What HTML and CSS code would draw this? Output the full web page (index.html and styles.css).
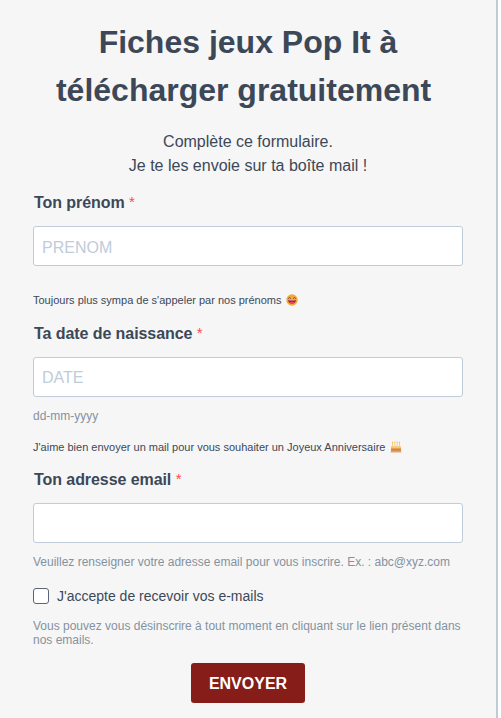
FILE: index.html
```html
<!DOCTYPE html>
<html lang="fr">
<head>
<meta charset="utf-8">
<title>Fiches jeux Pop It</title>
<link rel="stylesheet" href="styles.css">
</head>
<body>
<form class="panel">
  <h1 class="title">Fiches jeux Pop It à<br>télécharger gratuitement&nbsp;</h1>
  <p class="intro">Complète ce formulaire.<br>Je te les envoie sur ta boîte mail !</p>

  <div class="field field-name">
    <label class="label" for="name">Ton prénom <span class="req">*</span></label>
    <input class="input" id="name" type="text" placeholder="PRENOM">
    <p class="note note-name">Toujours plus sympa de s'appeler par nos prénoms
      <svg class="emoji" viewBox="0 0 12 12"><circle cx="6" cy="6" r="5.7" fill="#f3a73b"/><path d="M2.2 4.6 3.6 3.5 4.8 4.6M7.2 4.6 8.4 3.5 9.8 4.6" fill="none" stroke="#65402c" stroke-width=".9"/><path d="M2.2 6h7.6c0 5-7.6 5-7.6 0z" fill="#9c263d"/><path d="M3.200 6h5.600v.5H3.200z" fill="#e9b9a5"/><path d="M3.600 8.600c1-1 3.800-1 4.800 0-1 1.400-3.800 1.400-4.800 0z" fill="#ec4865"/></svg>
    </p>
  </div>

  <div class="field field-date">
    <label class="label" for="date">Ta date de naissance <span class="req">*</span></label>
    <input class="input input-date" id="date" type="text" placeholder="DATE">
    <p class="hint">dd-mm-yyyy</p>
    <p class="note">J'aime bien envoyer un mail pour vous souhaiter un Joyeux Anniversaire
      <svg class="emoji" viewBox="0 0 12 12"><path d="M2.5 2v4M4.8 1.5v4M7.2 1.5v4M9.5 2v4" stroke="#efcf93" stroke-width="1"/><path d="M2.5.8v1.3M4.8.5v1.3M7.2.5v1.3M9.5.8v1.3" stroke="#f5b941" stroke-width="1"/><path d="M1 5h10v6H1z" fill="#e5a052"/><path d="M1 5h10v1.500l-1 .7L8.500 6.500 7 7.200 5.500 6.500 4 7.200 2.500 6.500 1 7z" fill="#f5cf88"/><path d="M1 8.500h10v.8H1z" fill="#b96b37"/><path d="M.3 10.700h11.400v.8H.3z" fill="#d8b386"/></svg>
    </p>
  </div>

  <div class="field field-email">
    <label class="label" for="email">Ton adresse email <span class="req">*</span></label>
    <input class="input" id="email" type="text">
    <p class="hint">Veuillez renseigner votre adresse email pour vous inscrire. Ex. : abc@xyz.com</p>
  </div>

  <label class="consent"><input class="check" type="checkbox"><span>J'accepte de recevoir vos e-mails</span></label>
  <p class="hint legal">Vous pouvez vous désinscrire à tout moment en cliquant sur le lien présent dans nos emails.</p>
  <button class="submit" type="button">ENVOYER</button>
</form>
</body>
</html>
```

FILE: styles.css
```css
* { box-sizing: border-box; }
body {
  margin: 0;
  background: #fff;
  color: #3c4858;
  font-family: "Liberation Sans", Arial, sans-serif;
  font-size: 16px;
}
.panel {
  width: 498px;
  height: 718px;
  padding: 18px 33px 0;
  border-right: 2px solid #c0ccd5;
  background: #f6f6f6;
  overflow: hidden;
}
h1, p { margin: 0; }
.title {
  font-size: 32px;
  line-height: 48px;
  text-align: center;
  white-space: nowrap;
}
.intro {
  margin-top: 16px;
  line-height: 24px;
  text-align: center;
}
.label {
  display: block;
  height: 24px;
  padding-left: 1px;
  font-weight: 700;
  line-height: 24px;
  letter-spacing: -0.07px;
}
.req {
  color: #ff4949;
  font-size: 15px;
  font-weight: 400;
  line-height: 1;
  vertical-align: 1px;
}
.field-name { margin-top: 13px; height: 131px; }
.field-date { height: 146px; }
.input {
  display: block;
  width: 430px;
  height: 40px;
  margin: 11px 0 0;
  padding: 3px 8px 0;
  border: 1px solid #c0ccd9;
  border-radius: 3px;
  background: #fff;
  color: #3c4858;
  font: 16px "Liberation Sans", Arial, sans-serif;
}
.input-date { padding-top: 1px; }
.input::placeholder { color: #c0ccda; opacity: 1; }
.hint {
  margin-top: 12px;
  color: #8492a0;
  font-size: 12px;
  line-height: 14px;
}
.note {
  margin-top: 16px;
  font-size: 11px;
  line-height: 16px;
  white-space: nowrap;
}
.note-name { margin-top: 26px; }
.emoji {
  width: 12px;
  height: 12px;
  margin-left: 1px;
  vertical-align: -2px;
}
.consent {
  display: flex;
  align-items: center;
  gap: 8px;
  margin-top: 18px;
  height: 18px;
  font-size: 14px;
}
.check {
  appearance: none;
  width: 16px;
  height: 16px;
  margin: 0;
  border: 1px solid #5c6577;
  border-radius: 3px;
  background: #fff;
}
.legal { margin-top: 14px; }
.submit {
  display: block;
  width: 114px;
  height: 40px;
  margin: 16px auto 0;
  padding: 1px 0 0;
  border: 0;
  border-radius: 3px;
  background: #861d18;
  color: #fff;
  font: 700 16px "Liberation Sans", Arial, sans-serif;
}
```
